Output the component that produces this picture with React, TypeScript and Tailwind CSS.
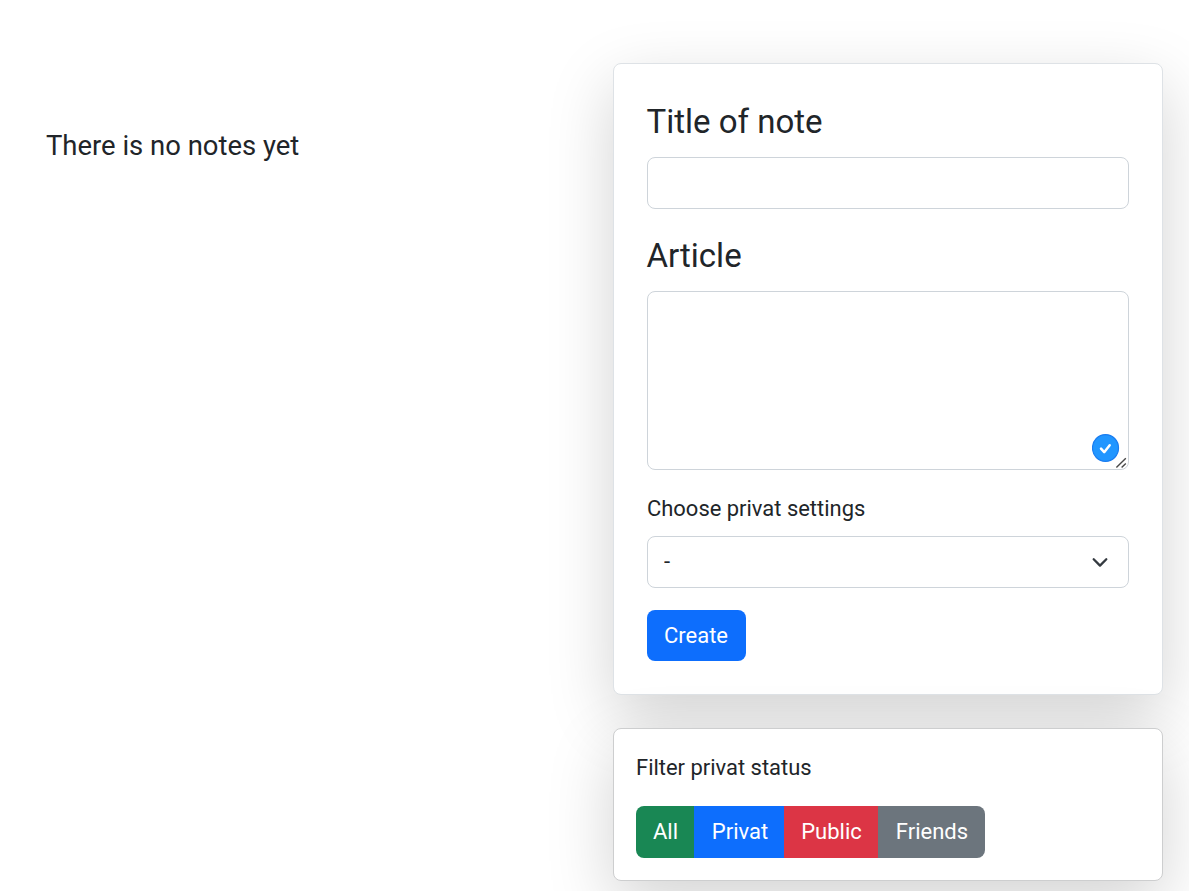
export default function App() {
  return (
    <main className="flex h-[891px] w-[1189px] items-start overflow-hidden bg-white font-['Roboto',sans-serif] text-[22px] leading-[33px] text-[#212529]">
      <section className="w-[613px] pt-[130px] pl-[46px]">
        <h1 className="text-[27.44px] leading-[33px]">There is no notes yet</h1>
      </section>

      <div className="flex w-[550px] flex-col gap-[33px] pt-[63px]">
        <form className="flex h-[632px] flex-col items-start rounded-lg border border-[#dee2e6] bg-white px-[33px] pt-[38px] shadow-[0_22px_66px_rgba(0,0,0,0.175)]">
          <label htmlFor="title" className="-ml-[0.5px] text-[33px] leading-10">Title of note</label>
          <input
            id="title"
            className="mt-[15px] h-[52px] w-full rounded-lg border border-[#ced4da] bg-white px-4 outline-none"
          />

          <label htmlFor="article" className="-ml-[0.5px] mt-[27px] text-[33px] leading-10">Article</label>
          <div className="relative mt-[15px] h-[179px] w-full">
            <textarea
              id="article"
              className="block h-full w-full resize-none rounded-lg border border-[#ced4da] bg-white px-4 py-2 outline-none"
            />
            <svg className="absolute right-[9px] bottom-[7px]" width="28" height="29" viewBox="0 0 28 29" fill="none">
              <ellipse cx="13.5" cy="14" rx="13" ry="13.4" fill="#2196ff" stroke="#1a7cf0" strokeWidth="1.2" />
              <path d="M9 14.7l3.2 3.5 5.5-7" stroke="#fff" strokeWidth="2.5" strokeLinecap="round" strokeLinejoin="round" />
            </svg>
            <svg className="absolute right-[2px] bottom-[1px]" width="12" height="12" viewBox="0 0 12 12" stroke="#484848" strokeWidth="1.4">
              <path d="M1.4 10.6L10.8 1.2M6.6 10.6l4.2-4.2" />
            </svg>
          </div>

          <label htmlFor="privacy" className="mt-[22px] text-[21.95px] leading-[33px]">Choose privat settings</label>
          <div className="relative mt-[11px] h-[52px] w-full">
            <select
              id="privacy"
              className="h-full w-full appearance-none rounded-lg border border-[#ced4da] bg-white px-4 pb-[2px] outline-none"
            >
              <option>-</option>
            </select>
            <svg className="pointer-events-none absolute top-[15px] right-[18px]" width="22" height="22" viewBox="0 0 22 22" fill="none">
              <path d="m4.7 8.2 6.3 6.4 6.3-6.4" stroke="#343a40" strokeWidth="2.3" strokeLinecap="round" strokeLinejoin="round" />
            </svg>
          </div>

          <button type="button" className="mt-[22px] h-[51px] w-[99px] rounded-lg bg-[#0d6efd] pr-px text-white">Create</button>
        </form>

        <section className="h-[153px] rounded-lg border border-[#cdcecf] bg-white px-[22px] pt-[22px] shadow-[0_22px_66px_rgba(0,0,0,0.175)]">
          <h2 className="text-[21.95px]">Filter privat status</h2>
          <div className="mt-[22px] flex h-[52px] w-[349px] overflow-hidden rounded-lg text-white">
            <button type="button" className="w-[58px] bg-[#198754] pb-[2px] pl-px">All</button>
            <button type="button" className="w-[90px] bg-[#0d6efd] pb-[2px] pl-[2px]">Privat</button>
            <button type="button" className="w-[94px] bg-[#dc3545] pb-[2px] pl-px">Public</button>
            <button type="button" className="w-[107px] bg-[#6c757d] pb-[2px] pl-px">Friends</button>
          </div>
        </section>
      </div>
    </main>
  );
}
